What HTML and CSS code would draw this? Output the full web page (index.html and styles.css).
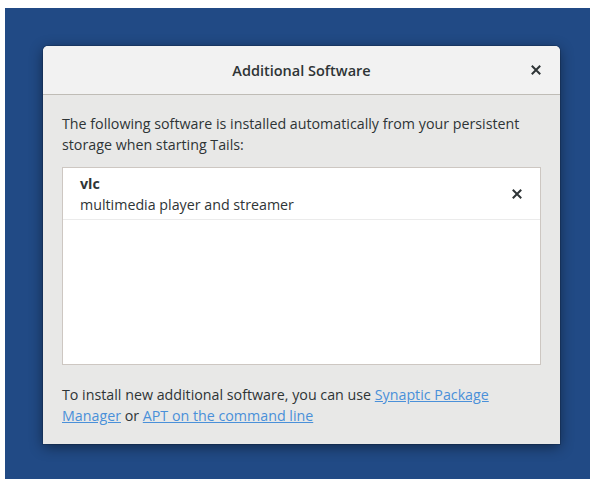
FILE: index.html
```html
<!DOCTYPE html>
<html>
<head>
<meta charset="utf-8">
<link rel="stylesheet" href="styles.css">
</head>
<body>
<div class="desktop">
  <div class="dialog">
    <div class="titlebar">
      <span class="title">Additional Software</span>
      <span class="close">
        <svg width="10" height="10" viewBox="0 0 10 10"><path d="M1.5 1.5 L8.5 8.5 M8.5 1.5 L1.5 8.5" stroke="#2e3436" stroke-width="2" stroke-linecap="square"/></svg>
      </span>
    </div>
    <div class="content">
      <p class="intro">The following software is installed automatically from your persistent storage when starting Tails:</p>
      <div class="list">
        <div class="row">
          <div class="pkg">
            <div class="pkg-name">vlc</div>
            <div class="pkg-desc">multimedia player and streamer</div>
          </div>
          <span class="remove">
            <svg width="10" height="10" viewBox="0 0 10 10"><path d="M1.5 1.5 L8.5 8.5 M8.5 1.5 L1.5 8.5" stroke="#2e3436" stroke-width="2" stroke-linecap="square"/></svg>
          </span>
        </div>
      </div>
      <p class="footer">To install new additional software, you can use <a href="#">Synaptic Package</a><br><a href="#">Manager</a> or <a href="#">APT on the command line</a></p>
    </div>
  </div>
</div>
</body>
</html>
```
FILE: styles.css
```css
html, body {
  margin: 0;
  padding: 0;
  background: #ffffff;
}

.desktop {
  margin: 8px 1px 0 5px;
  height: 471px;
  background: #214a85;
  padding: 38px 0 0 38px;
  box-sizing: border-box;
  font-family: "Open Sans", "DejaVu Sans", sans-serif;
  font-size: 14.25px;
  color: #2e3436;
}

.dialog {
  width: 517px;
  height: 398px;
  background: #e8e8e7;
  border-radius: 5px 5px 0 0;
  box-shadow: 0 3px 14px rgba(0, 0, 0, 0.45), 0 0 0 1px rgba(0, 0, 0, 0.15);
  display: flex;
  flex-direction: column;
}

.titlebar {
  height: 48px;
  flex: none;
  background: #f2f2f2;
  border-bottom: 1px solid #bfbcb6;
  border-radius: 5px 5px 0 0;
  display: flex;
  align-items: center;
  justify-content: center;
  position: relative;
}

.title {
  font-weight: 600;
  font-size: 14.5px;
  color: #2e3436;
}

.close {
  position: absolute;
  right: 19px;
  top: 19px;
  width: 10px;
  height: 10px;
  display: flex;
}

.content {
  padding: 18px 19px 0 19px;
  display: flex;
  flex-direction: column;
}

.intro {
  margin: 0;
  line-height: 21px;
}

.list {
  margin-top: 12px;
  height: 196px;
  background: #ffffff;
  border: 1px solid #cdc7c2;
}

.row {
  height: 51px;
  border-bottom: 1px solid #ebebeb;
  display: flex;
  align-items: center;
  padding: 0 18px 0 17px;
}

.pkg {
  flex: 1;
  line-height: 21px;
}

.pkg-name {
  font-weight: 700;
}

.remove {
  width: 10px;
  height: 10px;
  display: flex;
}

.footer {
  margin: 19px 0 0 0;
  line-height: 21px;
}

.footer a {
  color: #4a90d9;
  text-decoration: underline;
}
```
